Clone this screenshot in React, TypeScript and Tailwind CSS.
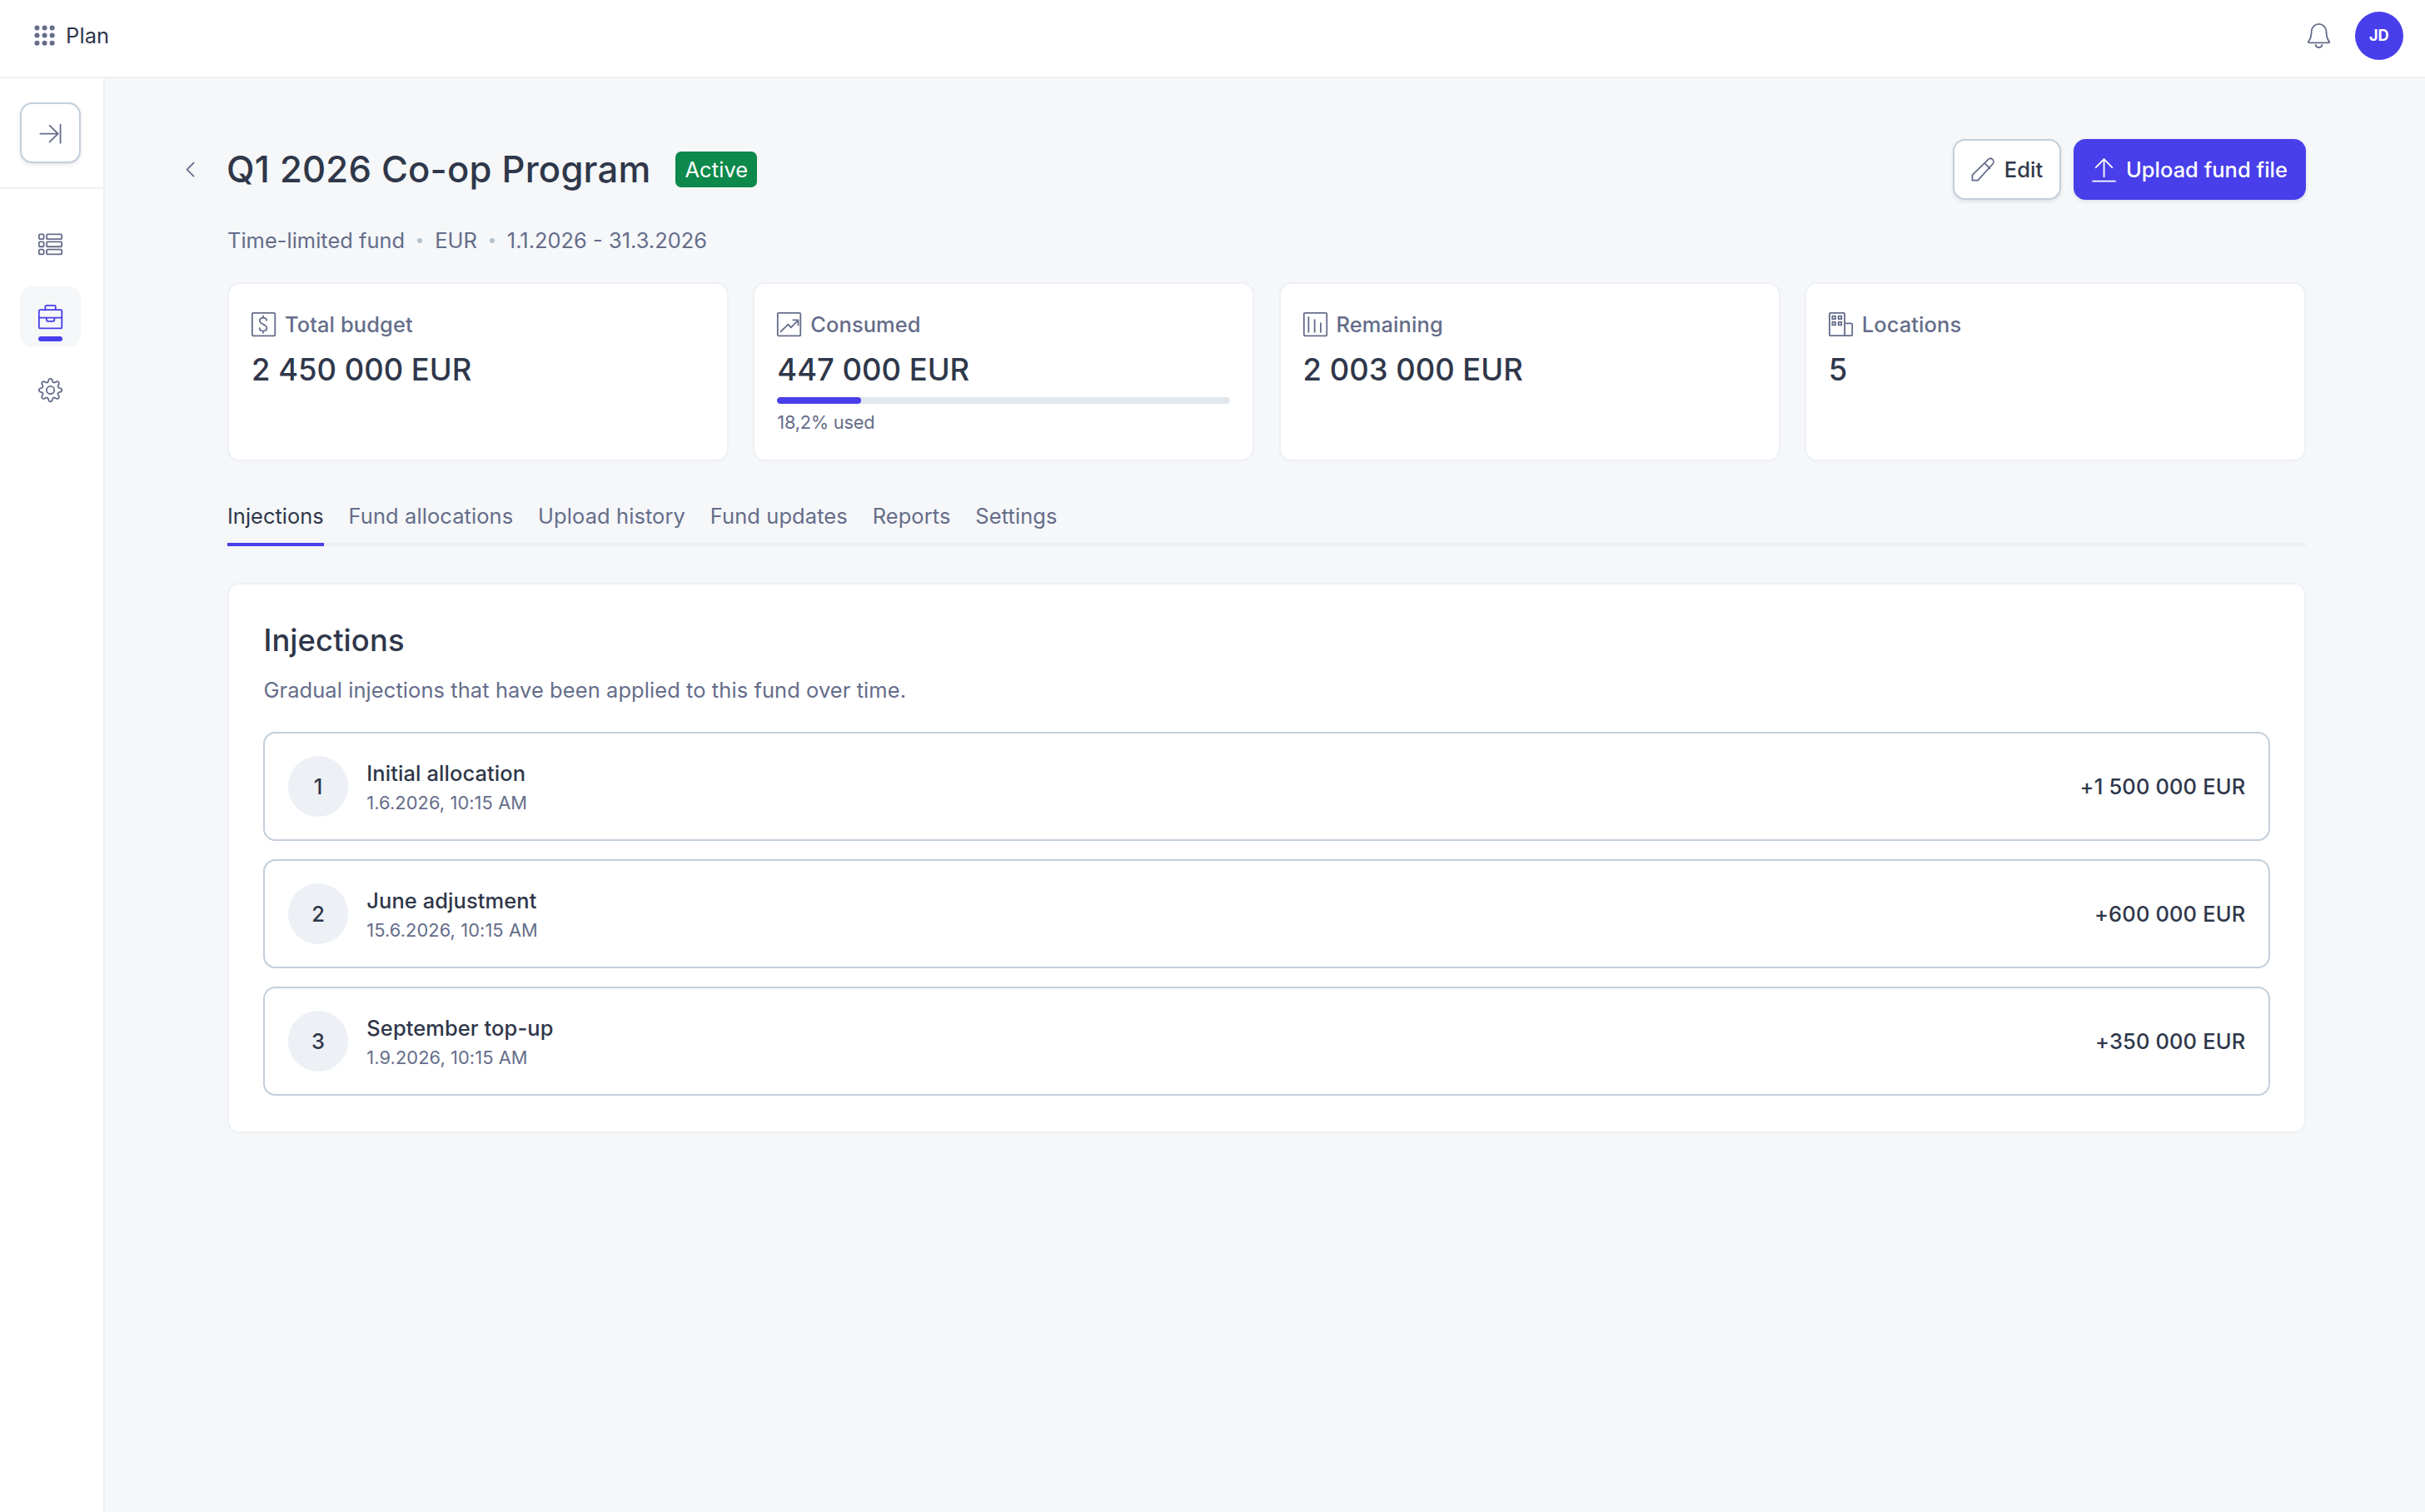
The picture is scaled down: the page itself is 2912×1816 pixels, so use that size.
import type { ReactNode } from "react";

type IconProps = { children: ReactNode; className?: string };

function Icon({ children, className = "" }: IconProps) {
  return (
    <svg
      viewBox="0 0 16 16"
      fill="none"
      stroke="currentColor"
      strokeWidth={1}
      strokeLinecap="round"
      strokeLinejoin="round"
      className={`size-4 shrink-0 overflow-visible ${className}`}
    >
      {children}
    </svg>
  );
}

/* Eight-toothed cog outline, sampled in polar form. */
function cogPath() {
  const points: string[] = [];
  for (let i = 0; i < 240; i++) {
    const t = (i / 240) * Math.PI * 2;
    const wave = Math.cos(8 * t);
    const r = 6.5 + 1.05 * Math.sign(wave) * Math.pow(Math.abs(wave), 0.7);
    points.push(`${(8 + r * Math.sin(t)).toFixed(3)} ${(8 - r * Math.cos(t)).toFixed(3)}`);
  }
  return `M${points.join("L")}Z`;
}

const DotsIcon = () => (
  <svg viewBox="0 0 16 16" fill="currentColor" className="size-4 shrink-0">
    {[3, 8, 13].map((y) =>
      [3, 8, 13].map((x) => <circle key={`${x}-${y}`} cx={x} cy={y} r={1.65} />),
    )}
  </svg>
);

const BellIcon = () => (
  <Icon>
    <path d="M8 .5a4.9 4.9 0 0 1 4.9 4.9c0 4 .9 5.3 1.9 6.6.3.4.1.8-.4.8H1.6c-.5 0-.7-.4-.4-.8 1-1.3 1.9-2.6 1.9-6.6A4.9 4.9 0 0 1 8 .5Z" />
    <path d="M5.9 14.3a2.15 2.15 0 0 0 4.2 0" />
  </Icon>
);

const ExpandIcon = () => (
  <Icon>
    <path d="M1.3 8.6H13M7.5 3.2 13 8.6l-5.5 5.4M14.6 2.5v12.2" />
  </Icon>
);

const ListIcon = () => (
  <Icon>
    {[1.3, 6.3, 11.3].map((y) => (
      <g key={y}>
        <rect x={0.45} y={y} width={3.2} height={3.2} rx={0.9} />
        <rect x={5.5} y={y} width={10} height={3.2} rx={0.9} />
      </g>
    ))}
  </Icon>
);

const BriefcaseIcon = () => (
  <Icon>
    <rect x={0.45} y={3.4} width={15.1} height={12.2} rx={0.9} />
    <path d="M4.6 3.3V1.3c0-.5.3-.8.8-.8h5.2c.5 0 .8.3.8.8v2M.5 8.6h15M5.4 8.7v1.4c0 .5.3.8.8.8h3.6c.5 0 .8-.3.8-.8V8.7" />
  </Icon>
);

const CogIcon = () => (
  <Icon>
    <path d={cogPath()} />
    <circle cx={8} cy={8} r={2.55} />
  </Icon>
);

const PencilIcon = () => (
  <Icon className="text-[#656d8a]">
    <path d="M.8 15.2v-3.6L11.2 1.4c.9-.9 2.1-.8 2.9-.1.9.8.9 2.2.1 3.1L4.4 15.2ZM8.9 3.8l3.5 3.5" />
  </Icon>
);

const UploadIcon = () => (
  <Icon>
    <path d="M8 12.8V1.2M2.6 6.7 8 1.2l5.4 5.5M.6 15.7h14.8" />
  </Icon>
);

const DollarIcon = () => (
  <Icon>
    <rect x={0.45} y={0.45} width={15.1} height={15.1} rx={0.7} />
    <path d="M7.7 2.4v1.2M7.7 12.4v1.2M10 5.4c0-1.1-1-1.8-2.3-1.8S5.4 4.4 5.4 5.5c0 2.7 4.7 2.3 4.7 5 0 1.1-1 1.9-2.4 1.9s-2.4-.8-2.4-1.9" />
  </Icon>
);

const TrendIcon = () => (
  <Icon>
    <rect x={0.45} y={0.45} width={15.1} height={15.1} rx={0.7} />
    <path d="m2.4 12.8 5-4.8 1.8 2.1 4.8-4.8M10.6 5.2H14v3.3" />
  </Icon>
);

const BarsIcon = () => (
  <Icon>
    <rect x={0.45} y={0.45} width={15.1} height={15.1} rx={0.7} />
    <path d="M3.5 3.2v9.9M7.5 5v8.1M11.5 7.2v5.9" />
  </Icon>
);

const BuildingIcon = () => (
  <Icon>
    <path d="M10.5 15.5H1.2c-.4 0-.7-.3-.7-.7V1.2c0-.4.3-.7.7-.7h8.6c.4 0 .7.3.7.7v14.3ZM10.5 7.4h4.3c.4 0 .7.3.7.7v6.7c0 .4-.3.7-.7.7h-4.3" />
    {[2.5, 6.5].map((y) =>
      [2.4, 6.4].map((x) => <rect key={`${x}-${y}`} x={x} y={y} width={2} height={2} />),
    )}
  </Icon>
);

type StatProps = { icon: ReactNode; label: string; value: string; children?: ReactNode };

function Stat({ icon, label, value, children }: StatProps) {
  return (
    <section className="h-[215px] rounded-lg border-2 border-[#edf0f5] bg-white px-[27px] pt-[31px]">
      <div className="flex h-5 items-center gap-1.5 text-sm font-medium text-[#656d8a]">
        {icon}
        <span>{label}</span>
      </div>
      <div className="mt-[11.4px] text-xl/[50px] font-medium tracking-normal">{value}</div>
      {children}
    </section>
  );
}

const USED = 18.5;

const tabs = ["Injections", "Fund allocations", "Upload history", "Fund updates", "Reports", "Settings"];

const injections = [
  { title: "Initial allocation", date: "1.6.2026, 10:15 AM", amount: "+1 500 000 EUR" },
  { title: "June adjustment", date: "15.6.2026, 10:15 AM", amount: "+600 000 EUR" },
  { title: "September top-up", date: "1.9.2026, 10:15 AM", amount: "+350 000 EUR" },
];

const Separator = () => <span className="size-[6px] rounded-full bg-[#b4c2d0]" />;

export default function App() {
  return (
    <div className="flex h-[1816px] w-[2912px] flex-col overflow-hidden bg-[#f5f7f9] font-[Inter,sans-serif] tracking-[0.08px] whitespace-nowrap text-[#2f374a] [--radius-lg:14.56px] [--spacing:7.28px] [--text-2xl:43.68px] [--text-sm:25.48px] [--text-xl:36.4px] [--text-xs:21.84px]">
      <header className="flex h-[94px] shrink-0 items-center justify-between border-b-2 border-[#edf0f5] bg-white pr-[26px] pb-[6px] pl-[39px]">
        <div className="flex items-center gap-[11px] text-[#656d8a]">
          <DotsIcon />
          <span className="text-sm text-[#2f374a]">Plan</span>
        </div>
        <div className="flex items-center gap-[29px] text-[#656d8a]">
          <BellIcon />
          <div className="flex size-8 items-center justify-center rounded-full bg-[#483eea] text-[18.2px] font-bold text-white">
            JD
          </div>
        </div>
      </header>

      <div className="flex min-h-0 flex-1">
        <aside className="flex w-[126px] shrink-0 flex-col border-r-2 border-[#edf0f5] bg-white text-[#656d8a]">
          <div className="flex h-[133px] shrink-0 border-b-2 border-[#edf0f5] pt-[29px] pl-[24px]">
            <button className="flex size-10 items-center justify-center rounded-lg border-2 border-[#c4cfdc] bg-white shadow-[0_2px_4px_rgba(47,55,74,0.12)]">
              <ExpandIcon />
            </button>
          </div>
          <nav className="flex flex-col gap-2 pt-[30px] pl-[24px]">
            <a className="flex size-10 items-center justify-center">
              <ListIcon />
            </a>
            <a className="relative flex size-10 items-center justify-center rounded-lg bg-[#f5f7f9] text-[#483eea]">
              <BriefcaseIcon />
              <span className="absolute bottom-[7.28px] h-[5.5px] w-4 rounded-full bg-[#483eea]" />
            </a>
            <a className="flex size-10 items-center justify-center">
              <CogIcon />
            </a>
          </nav>
        </aside>

        <main className="flex flex-1 flex-col pt-[73px] pr-[143px] pl-[147px]">
          <div className="-ml-[59px] flex h-10 shrink-0 items-center">
            <Icon className="text-[#656d8a]">
              <path d="M10.2 3.6 5.8 8l4.4 4.4" />
            </Icon>
            <h1 className="ml-[29px] pt-[2px] text-2xl font-medium tracking-[0.16px]">Q1 2026 Co-op Program</h1>
            <span className="ml-[30px] flex h-6 items-center rounded-[7px] bg-[#0c894b] px-[11px] pt-[1px] text-sm tracking-[0.1px] text-white">
              Active
            </span>
            <div className="ml-auto flex gap-2 text-sm font-medium">
              <button className="flex h-10 items-center gap-[11px] rounded-lg border-2 border-[#c4cfdc] bg-white px-[20px] shadow-[0_2px_4px_rgba(47,55,74,0.12)]">
                <PencilIcon />
                <span className="pt-[1px]">Edit</span>
              </button>
              <button className="flex h-10 items-center gap-[12px] rounded-lg bg-[#483eea] px-[22px] tracking-normal text-white shadow-[0_2px_4px_rgba(47,55,74,0.12)]">
                <UploadIcon />
                <span className="pt-[1px]">Upload fund file</span>
              </button>
            </div>
          </div>

          <div className="mt-[31.4px] flex shrink-0 items-center gap-[15px] text-sm tracking-normal text-[#656d8a]">
            <span>Time-limited fund</span>
            <Separator />
            <span>EUR</span>
            <Separator />
            <span>1.1.2026 - 31.3.2026</span>
          </div>

          <div className="mt-[31px] grid shrink-0 grid-cols-4 gap-4">
            <Stat icon={<DollarIcon />} label="Total budget" value="2 450 000 EUR" />
            <Stat icon={<TrendIcon />} label="Consumed" value="447 000 EUR">
              <div className="mt-[8px] h-[8px] overflow-hidden rounded-full bg-[#e2e7ec]">
                <div className="h-full rounded-full bg-[#483eea]" style={{ width: `${USED}%` }} />
              </div>
              <div className="mt-[8px] text-xs tracking-[-0.25px] text-[#656d8a]">18,2% used</div>
            </Stat>
            <Stat icon={<BarsIcon />} label="Remaining" value="2 003 000 EUR" />
            <Stat icon={<BuildingIcon />} label="Locations" value="5" />
          </div>

          <div className="mt-[47.4px] flex h-[55px] shrink-0 gap-[29.8px] border-b-[4px] border-[#edeff5] text-sm tracking-[0.09px] text-[#656d8a]">
            {tabs.map((tab, i) => (
              <button
                key={tab}
                className={
                  i === 0
                    ? "h-[55px] border-b-[4px] border-[#483eea] pb-[13px] tracking-normal text-[#2f374a]"
                    : "h-[55px] border-b-[4px] border-transparent pb-[13px]"
                }
              >
                {tab}
              </button>
            ))}
          </div>

          <section className="mt-[44px] h-[660.6px] shrink-0 rounded-lg border-2 border-[#edf0f5] bg-white px-[41.4px] pt-[42px]">
            <h2 className="text-xl font-medium">Injections</h2>
            <p className="mt-[16.4px] text-sm text-[#656d8a]">
              Gradual injections that have been applied to this fund over time.
            </p>
            <ul className="mt-[31px] flex flex-col gap-[21.9px]">
              {injections.map((item, i) => (
                <li
                  key={item.title}
                  className="flex h-[131.2px] items-center rounded-lg border-2 border-[#c4cfdc] px-[27.3px] text-sm font-medium"
                >
                  <span className="flex size-10 items-center justify-center rounded-full bg-[#edf0f5] pt-[1px]">
                    {i + 1}
                  </span>
                  <div className="ml-3 pt-[1px]">
                    <div>{item.title}</div>
                    <div className="mt-[3px] text-xs font-normal text-[#656d8a]">{item.date}</div>
                  </div>
                  <span className="ml-auto pt-[1px] tracking-[0.15px]">{item.amount}</span>
                </li>
              ))}
            </ul>
          </section>
        </main>
      </div>
    </div>
  );
}
